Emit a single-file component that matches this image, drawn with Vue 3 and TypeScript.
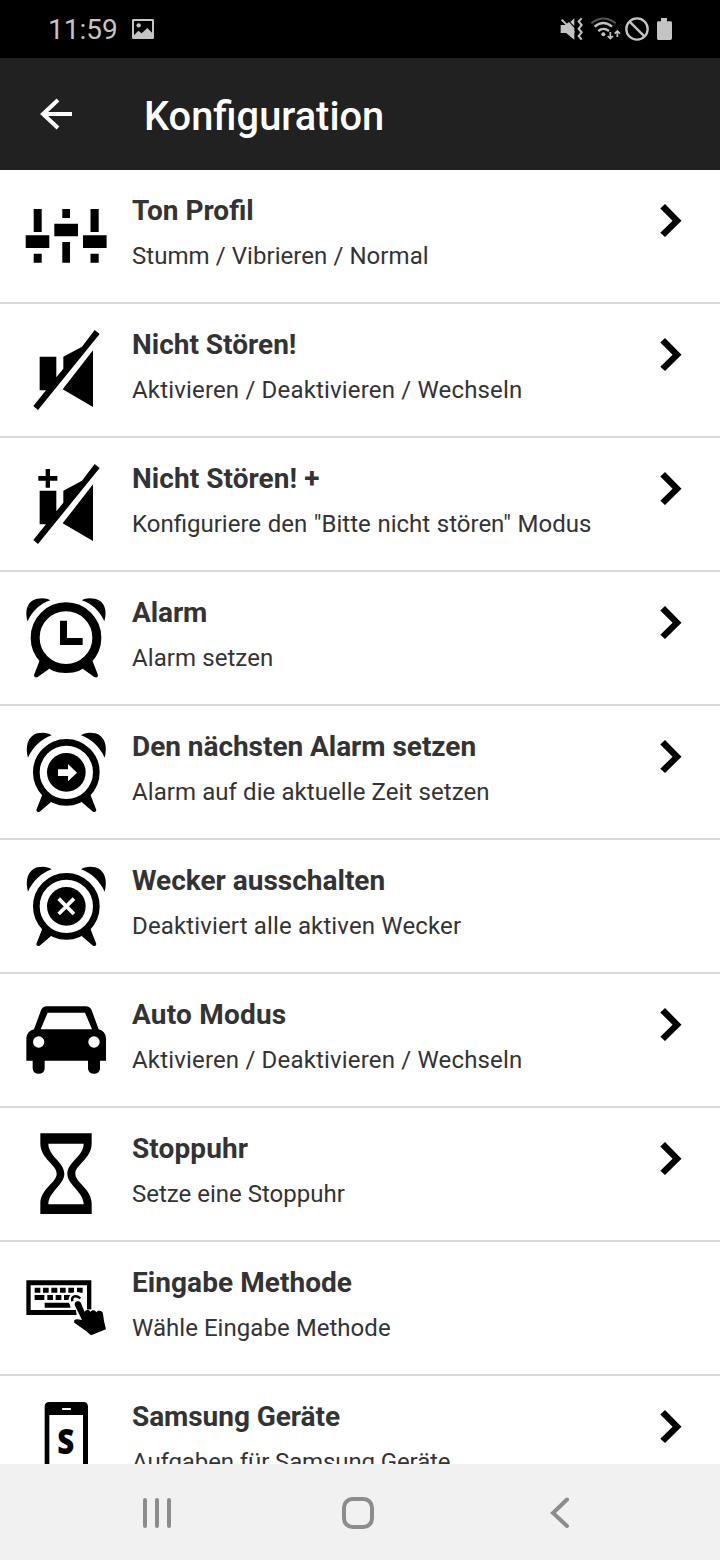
<script setup lang="ts">
type IconName =
  | 'sliders' | 'mute' | 'mutePlus' | 'alarm' | 'alarmNext'
  | 'alarmOff' | 'car' | 'hourglass' | 'keyboard' | 'phone'

interface Entry {
  icon: IconName
  title: string
  text: string
  more: boolean
  titleTracking?: number
  textTracking?: number
  wordGap?: number
}

// Tracking and word gap are in pixels.
const entries: Entry[] = [
  { icon: 'sliders', title: 'Ton Profil', text: 'Stumm / Vibrieren / Normal', more: true, textTracking: 0.06 },
  { icon: 'mute', title: 'Nicht Stören!', text: 'Aktivieren / Deaktivieren / Wechseln', more: true, textTracking: 0.17 },
  { icon: 'mutePlus', title: 'Nicht Stören! +', text: 'Konfiguriere den "Bitte nicht stören" Modus', more: true, wordGap: 0.7, titleTracking: 0.06 },
  { icon: 'alarm', title: 'Alarm', text: 'Alarm setzen', more: true, textTracking: 0.08, titleTracking: -0.1 },
  { icon: 'alarmNext', title: 'Den nächsten Alarm setzen', text: 'Alarm auf die aktuelle Zeit setzen', more: true, textTracking: 0.08, titleTracking: -0.04 },
  { icon: 'alarmOff', title: 'Wecker ausschalten', text: 'Deaktiviert alle aktiven Wecker', more: false, textTracking: 0.14 },
  { icon: 'car', title: 'Auto Modus', text: 'Aktivieren / Deaktivieren / Wechseln', more: true, textTracking: 0.17, titleTracking: 0.2 },
  { icon: 'hourglass', title: 'Stoppuhr', text: 'Setze eine Stoppuhr', more: true, titleTracking: 0.1 },
  { icon: 'keyboard', title: 'Eingabe Methode', text: 'Wähle Eingabe Methode', more: false, textTracking: 0.04, titleTracking: 0.06 },
  { icon: 'phone', title: 'Samsung Geräte', text: 'Aufgaben für Samsung Geräte', more: true, textTracking: -0.11, titleTracking: -0.06 },
]
</script>

<template>
  <div class="screen">
    <div class="status">
      <span class="clock">11:59</span>
      <svg class="picture" width="22" height="20" viewBox="0 0 66 60">
        <path fill-rule="evenodd" d="M4 0H62Q66 0 66 4V56Q66 60 62 60H4Q0 60 0 56V4Q0 0 4 0ZM6 6V49L19 35L29 43L46 27L60 41V6Z" />
        <circle cx="20" cy="19" r="6.500" />
      </svg>
      <svg class="signals" width="120" height="40" viewBox="0 0 360 120">
        <g transform="translate(0 -27)">
          <path d="M2 75H15L27 66L43 84V119L18 99H2Z" />
          <path d="M5 59L43 98" class="line" stroke-width="6" />
          <path d="M31 66L43 55V78Z" />
          <path class="line" stroke-width="6" d="M65 55L56 64L65 75L56 86L65 97L56 108L65 119" />
          <path class="line faint" stroke-width="6" d="M94 70Q130 41 167 70" />
          <path class="line" stroke-width="7" d="M104 80Q130 58 156 80M115 93Q130 80 147 93" />
          <circle cx="130" cy="103" r="6" />
          <path class="line" stroke-width="5" d="M151 96V115M143 108L151 116L159 108M172 111V93M164 101L172 93L180 101" />
          <circle class="line" cx="231" cy="87" r="32" stroke-width="7" />
          <path class="line" stroke-width="7" d="M208 64L254 110" />
          <path d="M303 54H321V64H332Q336 64 336 68V115Q336 120 331 120H295Q291 120 291 115V68Q291 64 295 64H303Z" />
        </g>
      </svg>
    </div>

    <header class="bar">
      <svg class="back" width="34" height="34" viewBox="0 0 34 34">
        <path d="M19 3L4 17L19 31M3.500 17H33" />
      </svg>
      <h1>Konfiguration</h1>
    </header>

    <main class="list">
      <div v-for="entry in entries" :key="entry.title" class="row">
        <svg class="icon" width="132" height="132" viewBox="0 0 132 132">
          <g v-if="entry.icon === 'sliders'">
            <path d="M33.700 39h8v23h-8zM25.700 65.300h23.600v12.700h-23.600zM33.700 83.700h8v9h-8zM62.300 39h7.700v9h-7.700zM54.300 53.700h23.700v12.600h-23.700zM62.300 72h7.700v20.700h-7.700zM90.500 39h8.200v23h-8.200zM83 65.300h23.600v12.700h-23.600zM90.500 83.700h8.200v9h-8.200z" />
          </g>
          <g v-else-if="entry.icon === 'mute' || entry.icon === 'mutePlus'" transform="translate(10 6) scale(.33333)">
            <path d="M89 140H139V202L160 176V140L216 110L254 60L269 72L84 300L70 288L108 241H89ZM249 121V291L158 238Z" />
            <path v-if="entry.icon === 'mutePlus'" d="M107 75H120V96H142V110H120V131H107V110H85V96H107Z" />
          </g>
          <g v-else-if="entry.icon === 'alarm'" transform="translate(10 8) scale(.33333)">
            <circle class="ring" cx="168" cy="173" r="92.500" stroke-width="27" />
            <path d="M150 122H171V174H218V195H150Z" />
            <path d="M53 124C44 95 50 62 82 56C97 53 112 54 121 61C93 69 65 95 53 124ZM283 124C292 95 286 62 254 56C239 53 224 54 215 61C243 69 271 95 283 124Z" />
            <path d="M91 236L72 285Q72 295 83 291L118 266ZM245 236L264 285Q264 295 253 291L218 266Z" />
          </g>
          <g v-else-if="entry.icon === 'alarmNext' || entry.icon === 'alarmOff'" transform="translate(10 9) scale(.33333)">
            <circle class="ring" cx="169" cy="172" r="90" stroke-width="20" />
            <circle cx="169" cy="172" r="58" />
            <path d="M54 128C45 95 53 63 82 55C97 51 116 53 125 61C95 71 68 97 54 128ZM284 128C293 95 285 63 256 55C241 51 222 53 213 61C243 71 270 97 284 128Z" />
            <path d="M98 236L79 285Q80 294 89 290L124 260ZM240 236L259 285Q258 294 249 290L214 260Z" />
            <path v-if="entry.icon === 'alarmNext'" class="light" d="M144 163H174V147L201 173L174 199V183H144Z" />
            <path v-else class="cross" d="M146 149L192 195M192 149L146 195" />
          </g>
          <g v-else-if="entry.icon === 'car'" transform="translate(10 16) scale(.33333)">
            <path fill-rule="evenodd" d="M110 49H227Q240 49 245 61L266 118Q287 124 288 145V212H270V236Q268 251 252 251Q236 251 234 236V212H104V236Q102 251 86 251Q70 251 68 236V212H49V145Q50 124 72 118L93 61Q98 49 110 49ZM113 68L92 118H246L225 68Z" />
            <circle class="light" cx="86" cy="156" r="17" />
            <circle class="light" cx="252" cy="156" r="17" />
          </g>
          <g v-else-if="entry.icon === 'hourglass'" transform="translate(10 -118) scale(.33333)">
            <path fill-rule="evenodd" d="M91 430H245V460C245 507 196 524 196 551C196 578 245 596 245 641V672H91V641C91 596 140 578 140 551C140 524 91 507 91 460ZM115 461C115 498 163 517 163 551C163 585 115 605 115 643H221C221 605 172 585 172 551C172 517 221 498 221 461Z" />
          </g>
          <g v-else-if="entry.icon === 'keyboard'" transform="translate(10 18) scale(.33333)">
            <path fill-rule="evenodd" d="M49 61H244V165H49ZM62 76V150H231V76Z" />
            <path d="M74 83h17v15h-17zM99 83h17v15h-17zM124 83h18v15h-18zM150 83h17v15h-17zM175 83h17v15h-17zM201 83h17v15h-17zM74 105h29v15h-29zM112 105h17v15h-17zM137 105h17v15h-17zM162 105h20v15h-20zM104 128h77v15h-77z" />
            <path class="halo" d="M204 133L220 170L221 158L260 156L278 164L288 210L243 226L200 190L211 178Z" />
            <circle class="light" cx="200" cy="121" r="25" />
            <path class="ring" stroke-width="7" d="M187 124C183 108 198 104 211 115" />
            <path d="M195 137C190 124 208 119 213 130L224 156C227 149 238 148 241 156C245 149 256 149 259 157C266 149 278 152 279 162L282 183L288 208L243 226L229 214L193 188C189 178 198 175 216 180Z" />
          </g>
          <g v-else transform="translate(0 4) scale(.33333)">
            <path fill-rule="evenodd" d="M148 66H250Q264 66 264 80V400H134V80Q134 66 148 66ZM148 105V350H249V105Z" />
            <rect class="light" x="186" y="84" width="27" height="6" rx="2" />
            <text x="172" y="223" textLength="51" lengthAdjust="spacingAndGlyphs" class="letter">S</text>
          </g>
        </svg>
        <div class="copy">
          <h2 :style="{ letterSpacing: (entry.titleTracking ?? 0) + 'px' }">{{ entry.title }}</h2>
          <p :style="{ letterSpacing: (entry.textTracking ?? 0) + 'px', wordSpacing: (entry.wordGap ?? 0) + 'px' }">{{ entry.text }}</p>
        </div>
        <svg v-if="entry.more" class="chevron" width="22" height="34" viewBox="0 0 22 34">
          <path d="M5 0L21.500 16.700L5 33L.300 28.700L12.600 16.700L.300 4.500Z" />
        </svg>
      </div>
    </main>

    <nav class="nav">
      <svg width="720" height="96" viewBox="0 0 720 96">
        <path d="M145 36V62M157 36V62M169 36V62" />
        <rect x="344" y="35" width="28" height="28" rx="8.500" />
        <path d="M567 35.500L553 49L567 62" />
      </svg>
    </nav>
  </div>
</template>

<style>
body {
  margin: 0;
  background: #fff;
}
</style>

<style scoped>
.screen {
  width: 720px;
  height: 1560px;
  display: flex;
  flex-direction: column;
  overflow: hidden;
  background: #fff;
  font-family: Roboto, "Liberation Sans", sans-serif;
}
.status {
  flex: none;
  height: 58px;
  box-sizing: border-box;
  padding: 0 40px 0 48px;
  display: flex;
  align-items: center;
  background: #000;
  color: #c4c4c4;
}
.status svg {
  fill: #c4c4c4;
}
.clock {
  width: 84px;
  font-size: 28px;
  line-height: 58px;
  padding-top: 2px;
}
.signals {
  margin-left: auto;
}
.status .line {
  fill: none;
  stroke: #c4c4c4;
}
.status .faint {
  stroke: #555;
}
.bar {
  flex: none;
  height: 112px;
  box-sizing: border-box;
  padding-left: 39px;
  display: flex;
  align-items: center;
  background: #212121;
  color: #fff;
}
.back {
  width: 34px;
  fill: none;
  stroke: #fff;
  stroke-width: 4;
}
h1 {
  margin: 6px 0 0 71px;
  font-size: 39.8px;
  font-weight: 500;
  line-height: 48px;
}
.list {
  flex: 1;
  min-height: 0;
  overflow: hidden;
}
.row {
  height: 132px;
  display: flex;
  border-bottom: 2px solid #dadada;
}
.icon {
  flex: none;
}
.ring {
  fill: none;
  stroke: #000;
}
.light {
  fill: #fff;
}
.cross {
  fill: none;
  stroke: #fff;
  stroke-width: 11;
}
.halo {
  fill: #fff;
  stroke: #fff;
  stroke-width: 18;
  stroke-linejoin: round;
}
.letter {
  font: 800 104px "Open Sans", sans-serif;
}
.copy {
  flex: 1;
  color: #333;
  white-space: nowrap;
}
h2 {
  margin: 24px 0 0;
  font-size: 28px;
  font-weight: 700;
  line-height: 34px;
}
p {
  margin: 12px 0 0;
  font-size: 24px;
  font-weight: 400;
  line-height: 32px;
}
.chevron {
  flex: none;
  margin: 34px 38px 0 0;
}
.nav {
  flex: none;
  height: 96px;
  background: #f1f1f1;
}
.nav svg {
  display: block;
  fill: none;
  stroke: #8c8c8c;
  stroke-width: 4;
  stroke-linecap: round;
}
</style>
